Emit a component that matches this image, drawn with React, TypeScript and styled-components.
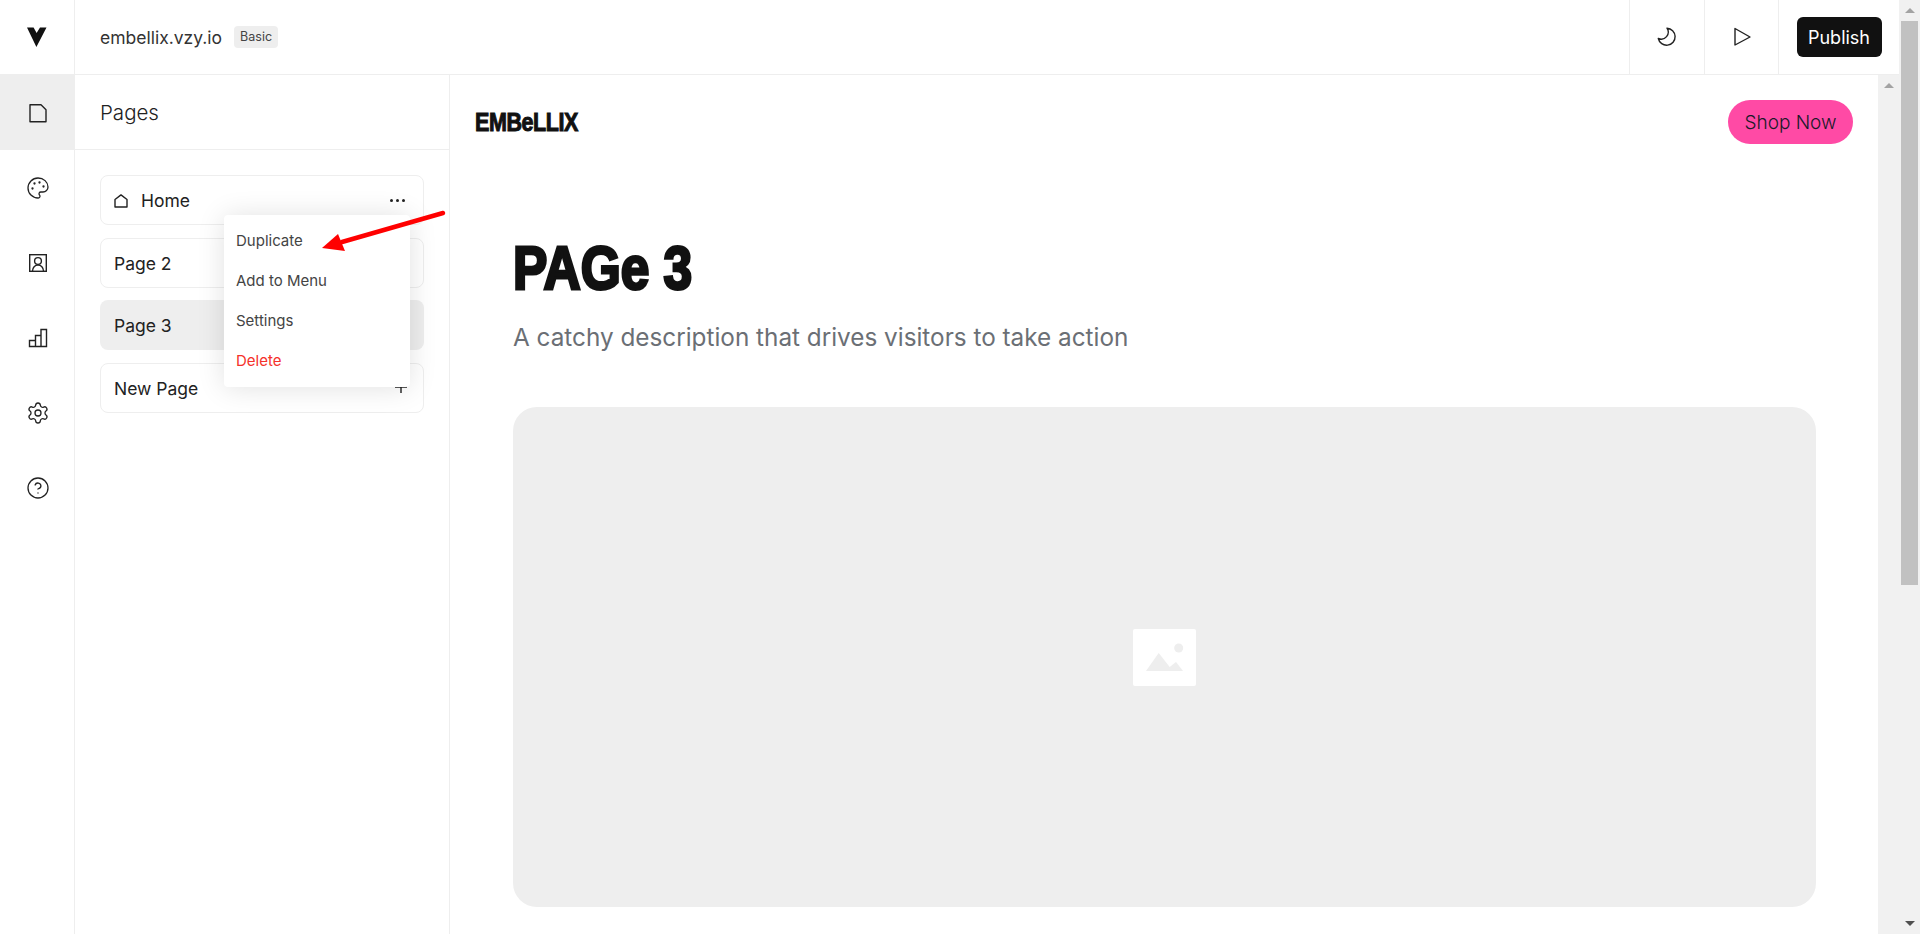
import React, { FC, ReactNode } from 'react';
import styled, { createGlobalStyle } from 'styled-components';
import { Palette, Settings, CircleHelp } from 'lucide-react';

const UI_FONT = `Inter, 'Liberation Sans', sans-serif`;
const SITE_FONT = `Inter, 'Open Sans', sans-serif`;
const DISPLAY_FONT = `'Liberation Sans', Arial, sans-serif`;

const GlobalStyle = createGlobalStyle`
  html, body {
    height: 100%;
    overflow: hidden;
  }

  body {
    margin: 0;
    background: #fff;
    color: #222;
    font-family: ${ UI_FONT };
  }

  * {
    box-sizing: border-box;
  }
`;

const Window = styled.div`
  position: relative;
  display: flex;
  height: 934px;
  overflow: hidden;
`;

const Shell = styled.div`
  display: flex;
  flex-direction: column;
  flex: 1;
  min-width: 0;
`;

const ScrollTrack = styled.div`
  display: flex;
  flex-direction: column;
  flex: 0 0 21px;
  background: #f1f1f1;
`;

const ScrollArrow = styled.div<{ $down?: boolean }>`
  display: flex;
  align-items: center;
  justify-content: center;
  flex: 0 0 21px;

  &::before {
    content: '';
    border-left: 5px solid transparent;
    border-right: 5px solid transparent;
    border-${ props => props.$down ? 'top' : 'bottom' }: 5px solid ${ props => props.$down ? '#505050' : '#a3a3a3' };
  }
`;

const ScrollThumb = styled.div`
  flex: 0 0 564px;
  margin: 0 2px;
  background: #c1c1c1;
`;

const ScrollSpacer = styled.div`
  flex: 1;
`;

const TopBar = styled.header`
  display: flex;
  align-items: stretch;
  flex: 0 0 75px;
  border-bottom: 1px solid #eee;
`;

const LogoCell = styled.div`
  display: flex;
  align-items: center;
  justify-content: center;
  width: 75px;
  border-right: 1px solid #eee;
`;

const SiteInfo = styled.div`
  display: flex;
  align-items: center;
  flex: 1;
  gap: 12px;
  padding-left: 25px;
`;

const SiteName = styled.span`
  font-size: 17.5px;
  font-weight: 400;
  color: #333;
`;

const PlanBadge = styled.span`
  padding: 3px 6px;
  border-radius: 4px;
  background: #eee;
  font-size: 12.5px;
  line-height: 16px;
  color: #444;
`;

const ToolCell = styled.div<{ $width: number }>`
  display: flex;
  align-items: center;
  justify-content: center;
  width: ${ props => props.$width }px;
  border-left: 1px solid #eee;
`;

const PublishButton = styled.button`
  width: 85px;
  height: 40px;
  padding: 0;
  border: 0;
  border-radius: 6px;
  background: #111;
  color: #fff;
  font-family: ${ UI_FONT };
  font-size: 18px;
`;

const Body = styled.div`
  display: flex;
  flex: 1;
  min-height: 0;
`;

const Rail = styled.nav`
  display: flex;
  flex-direction: column;
  flex: 0 0 75px;
  border-right: 1px solid #eee;
`;

const RailItem = styled.div<{ $active?: boolean }>`
  display: flex;
  align-items: center;
  justify-content: center;
  height: 75px;
  padding-left: 1px;
  background: ${ props => props.$active ? '#eee' : 'transparent' };
  color: #222;
`;

const Sidebar = styled.aside`
  flex: 0 0 375px;
  border-right: 1px solid #eee;
`;

const SidebarHeader = styled.div`
  display: flex;
  align-items: center;
  height: 75px;
  padding-left: 25px;
  border-bottom: 1px solid #eee;
  font-size: 20.5px;
  font-weight: 300;
  color: #222;
`;

const PageList = styled.div`
  position: relative;
  display: flex;
  flex-direction: column;
  gap: 12.5px;
  margin: 25px 25px 0;
`;

const PageCard = styled.div<{ $selected?: boolean }>`
  display: flex;
  align-items: center;
  justify-content: space-between;
  height: 50px;
  padding: 1px 14px 0 13px;
  border: 1px solid ${ props => props.$selected ? 'transparent' : '#eee' };
  border-radius: 8px;
  background: ${ props => props.$selected ? '#eee' : '#fff' };
  font-size: 17.5px;
  font-weight: 400;
  color: #222;
`;

const CardLabel = styled.span`
  display: flex;
  align-items: center;
  gap: 13px;
`;

const MoreDots = styled.span`
  display: flex;
  gap: 3px;
  margin-right: 4px;

  > i {
    width: 3px;
    height: 3px;
    border-radius: 50%;
    background: #222;
  }
`;

const PlusMark = styled.span`
  display: flex;
  margin: 0 2px 2px 0;
`;

const PageMenu = styled.div`
  position: absolute;
  top: 40px;
  left: 124px;
  width: 186px;
  padding: 6px 0;
  border-radius: 4px;
  background: #fff;
  box-shadow: 0 1px 28px rgba(0, 0, 0, 0.12);
`;

const MenuItem = styled.div<{ $danger?: boolean }>`
  height: 40px;
  padding-left: 12px;
  font-size: 15px;
  line-height: 40px;
  color: ${ props => props.$danger ? '#f5312b' : '#444' };
`;

const Preview = styled.main`
  display: flex;
  flex: 1;
  min-width: 0;
`;

const PreviewPage = styled.div`
  flex: 1;
  min-width: 0;
`;

const SiteNav = styled.div`
  display: flex;
  align-items: center;
  justify-content: space-between;
  padding: 25px 25px 0;
`;

const SiteLogo = styled.div`
  font-family: ${ DISPLAY_FONT };
  font-size: 25px;
  font-weight: 700;
  line-height: 44px;
  letter-spacing: -0.5px;
  color: #111;
  -webkit-text-stroke: 1px #111;
  transform: scaleX(0.86);
  transform-origin: left center;
`;

const ShopButton = styled.button`
  width: 125px;
  height: 44px;
  padding: 0;
  border: 0;
  border-radius: 22px;
  background: #ff4aa5;
  color: #1a1a2a;
  font-family: ${ SITE_FONT };
  font-size: 19px;
  font-weight: 300;
`;

const Hero = styled.section`
  padding: 94px 62px 0 63px;
`;

const HeroTitle = styled.h1`
  margin: 0;
  font-family: ${ DISPLAY_FONT };
  font-size: 62px;
  font-weight: 700;
  line-height: 60px;
  color: #111;
  -webkit-text-stroke: 3px #111;
  transform: scaleX(0.83);
  transform-origin: left center;
`;

const HeroText = styled.p`
  margin: 21px 0 0;
  font-family: ${ SITE_FONT };
  font-size: 24.3px;
  font-weight: 400;
  line-height: 36px;
  color: #6b6f75;
`;

const ImagePlaceholder = styled.div`
  display: flex;
  align-items: center;
  justify-content: center;
  height: 500px;
  margin-top: 52px;
  border-radius: 24px;
  background: #eee;
`;

const Annotation = styled.svg`
  position: absolute;
  top: 208px;
  left: 318px;
`;

const LineIcon: FC<{ size?: number; view?: string; children: ReactNode }> = ({ size = 20, view = '0 0 20 20', children }) => (
  <svg width={ size } height={ size } viewBox={ view } fill="none" stroke="#222" strokeWidth="1.4">
    { children }
  </svg>
);

const App: FC = () => (
  <Window>
    <GlobalStyle />
    <Shell>
      <TopBar>
        <LogoCell>
          <svg width="20" height="20" viewBox="0 0 20 20">
            <path d="M0 .5h6.600l3 5.400L13 .5h6.500L9.400 20z" fill="#111" />
          </svg>
        </LogoCell>
        <SiteInfo>
          <SiteName>embellix.vzy.io</SiteName>
          <PlanBadge>Basic</PlanBadge>
        </SiteInfo>
        <ToolCell $width={ 75 }>
          <LineIcon>
            <path d="M10 1.200A8.500 8.500 0 1 1 1.300 11.500 7 7 0 0 0 10 1.200Z" strokeLinejoin="round" />
          </LineIcon>
        </ToolCell>
        <ToolCell $width={ 74 }>
          <LineIcon>
            <path d="M3 1.500 18 10 3 18z" strokeLinejoin="round" />
          </LineIcon>
        </ToolCell>
        <ToolCell $width={ 121 }>
          <PublishButton>Publish</PublishButton>
        </ToolCell>
      </TopBar>
      <Body>
        <Rail>
          <RailItem $active>
            <LineIcon>
              <path d="M2 1.700h11l5 5V18.700H2z" strokeLinejoin="round" />
            </LineIcon>
          </RailItem>
          <RailItem><Palette size={ 24 } strokeWidth={ 1.3 } /></RailItem>
          <RailItem>
            <LineIcon>
              <rect x="1.700" y="1.700" width="16.600" height="16.600" />
              <circle cx="10" cy="8" r="3.400" />
              <path d="M4.500 18c0-3.500 2.500-6 5.500-6s5.500 2.500 5.500 6" />
            </LineIcon>
          </RailItem>
          <RailItem>
            <LineIcon>
              <path d="M1.500 18.500v-6h6v6zM7.500 18.500v-11h5.500v11zM13 18.500V1.500h5.500v17z" />
            </LineIcon>
          </RailItem>
          <RailItem><Settings size={ 24 } strokeWidth={ 1.3 } /></RailItem>
          <RailItem><CircleHelp size={ 24 } strokeWidth={ 1.3 } /></RailItem>
        </Rail>
        <Sidebar>
          <SidebarHeader>Pages</SidebarHeader>
          <PageList>
            <PageCard>
              <CardLabel>
                <LineIcon size={ 14 } view="0 0 14 14">
                  <path d="M1 13V5.500L7 .9l6 4.600V13z" strokeLinejoin="round" />
                </LineIcon>
                Home
              </CardLabel>
              <MoreDots><i /><i /><i /></MoreDots>
            </PageCard>
            <PageCard>Page 2</PageCard>
            <PageCard $selected>Page 3</PageCard>
            <PageCard>
              New Page
              <PlusMark>
                <LineIcon size={ 12 } view="0 0 12 12">
                  <path d="M6 0v12M0 6h12" />
                </LineIcon>
              </PlusMark>
            </PageCard>
            <PageMenu>
              <MenuItem>Duplicate</MenuItem>
              <MenuItem>Add to Menu</MenuItem>
              <MenuItem>Settings</MenuItem>
              <MenuItem $danger>Delete</MenuItem>
            </PageMenu>
          </PageList>
        </Sidebar>
        <Preview>
          <PreviewPage>
            <SiteNav>
              <SiteLogo>EMBeLLIX</SiteLogo>
              <ShopButton>Shop Now</ShopButton>
            </SiteNav>
            <Hero>
              <HeroTitle>PAGe 3</HeroTitle>
              <HeroText>A catchy description that drives visitors to take action</HeroText>
              <ImagePlaceholder>
                <svg width="63" height="57" viewBox="0 0 63 57">
                  <rect width="63" height="57" rx="2" fill="#fff" />
                  <path d="M13 42 25.700 24 36.700 38 43 33 50 42z" fill="#eee" />
                  <circle cx="45.700" cy="19" r="4.500" fill="#eee" />
                </svg>
              </ImagePlaceholder>
            </Hero>
          </PreviewPage>
          <ScrollTrack>
            <ScrollArrow />
          </ScrollTrack>
        </Preview>
      </Body>
    </Shell>
    <ScrollTrack>
      <ScrollArrow />
      <ScrollThumb />
      <ScrollSpacer />
      <ScrollArrow $down />
    </ScrollTrack>
    <Annotation width="130" height="48" viewBox="0 0 130 48">
      <path d="M125 5 24 34" stroke="#f00" strokeWidth="4.500" strokeLinecap="round" />
      <path d="M4 40 20 26 27 43z" fill="#f00" />
    </Annotation>
  </Window>
);

export default App;
